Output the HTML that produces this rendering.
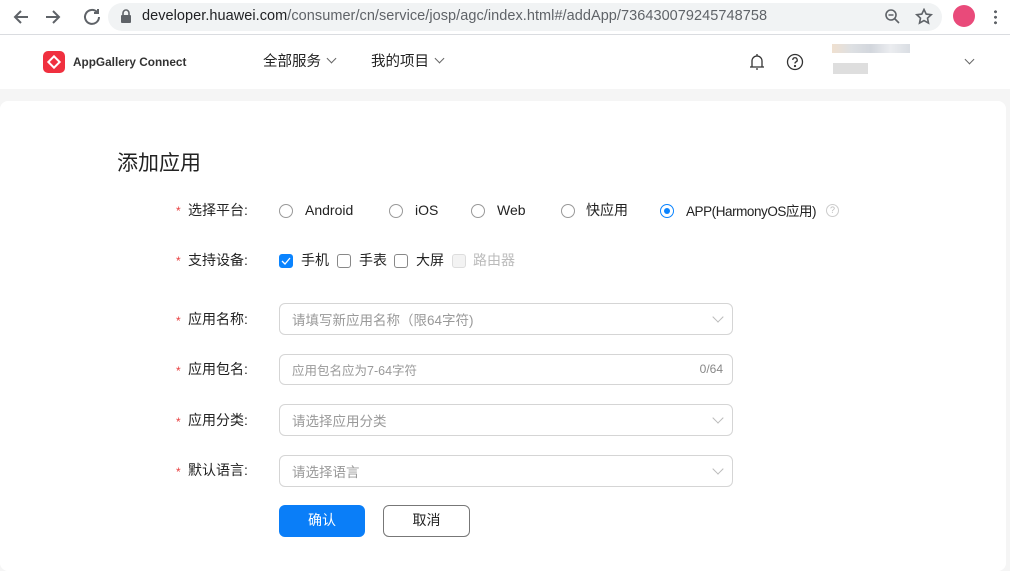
<!DOCTYPE html>
<html><head><meta charset="utf-8"><style>
*{margin:0;padding:0;box-sizing:border-box}
body{width:1010px;height:565px;overflow:hidden;background:#f5f5f5;font-family:"Liberation Sans","Noto Sans CJK SC",sans-serif;position:relative;color:#222}
.abs{position:absolute}
.chrome{left:0;top:0;width:1010px;height:35px;background:#fff;border-bottom:1px solid #dadce0}
.url{left:108px;top:3px;width:834px;height:28px;background:#f1f3f4;border-radius:14px}
.urltext{left:142px;top:8px;font-size:14.5px;color:#202124;letter-spacing:0.05px}
.hdr{left:0;top:35px;width:1010px;height:54px;background:#fff}
.card{left:0;top:101px;width:1006px;height:470px;background:#fff;border-radius:8px}
.lab{font-size:14px;color:#222}
.cj{margin-top:-2px}
.star{color:#e84040;font-size:12px}
.radio{width:14px;height:14px;border:1px solid #999;border-radius:50%;background:#fff}
.cb{width:14px;height:14px;border:1px solid #888;border-radius:3px;background:#fff}
.inp{left:279px;width:454px;height:32px;border:1px solid #d5d5d5;border-radius:6px;background:#fff}
.ph{left:12px;top:5px;font-size:13.5px;color:#999}
.chev{right:10px;top:9px;width:8px;height:8px;border-right:1px solid #bbb;border-bottom:1px solid #bbb;transform:rotate(45deg)}
</style></head><body>
<div class="abs chrome"></div>
<svg class="abs" style="left:12px;top:8px" width="90" height="18" viewBox="0 0 90 18" fill="none" stroke="#5f6368" stroke-width="2">
<path d="M16 9H3M9 3L3 9l6 6"/><path d="M34 9h13M41 3l6 6-6 6"/>
<path d="M87 9a7 7 0 1 1-2-5" /><path d="M86 1v4h-4" />
</svg>
<div class="abs url"></div>
<svg class="abs" style="left:120px;top:9px" width="12" height="14" viewBox="0 0 12 14"><rect x="1" y="6" width="10" height="8" rx="1" fill="#5f6368"/><path d="M3 6V4a3 3 0 0 1 6 0v2" stroke="#5f6368" stroke-width="1.6" fill="none"/></svg>
<div class="abs urltext">developer.huawei.com<span style="color:#5f6368">/consumer/cn/service/josp/agc/index.html#/addApp/736430079245748758</span></div>
<svg class="abs" style="left:884px;top:8px" width="50" height="18" viewBox="0 0 50 18" fill="none" stroke="#5f6368" stroke-width="1.6"><circle cx="7" cy="7" r="5"/><path d="M11 11l4 4M4.5 7h5"/><path d="M40 1.5l2.2 4.6 5 .6-3.7 3.4 1 5-4.5-2.5-4.5 2.5 1-5-3.7-3.4 5-.6z"/></svg>
<div class="abs" style="left:953px;top:5px;width:22px;height:22px;border-radius:50%;background:#e94a7a"></div>
<div class="abs" style="left:994px;top:9px;width:3px;height:16px;background:radial-gradient(circle,#5f6368 1.4px,transparent 1.6px) 0 0/3px 5.5px"></div>

<div class="abs hdr"></div>
<div class="abs" style="left:43px;top:51px;width:22px;height:22px;border-radius:5px;background:#f0303f"></div>
<div class="abs" style="left:49px;top:57px;width:10px;height:10px;border:2.5px solid #fff;transform:rotate(45deg)"></div>
<div class="abs" style="left:73px;top:55px;font-size:11.8px;font-weight:bold;color:#333">AppGallery Connect</div>
<div class="abs" style="left:263px;top:50px;font-size:14.5px">全部服务</div>
<div class="abs" style="left:328px;top:55px;width:7px;height:7px;border-right:1px solid #666;border-bottom:1px solid #666;transform:rotate(45deg)"></div>
<div class="abs" style="left:371px;top:50px;font-size:14.5px">我的项目</div>
<div class="abs" style="left:436px;top:55px;width:7px;height:7px;border-right:1px solid #666;border-bottom:1px solid #666;transform:rotate(45deg)"></div>
<svg class="abs" style="left:748px;top:52px" width="20" height="20" viewBox="0 0 20 20" fill="none" stroke="#333" stroke-width="1.3"><path d="M4 15V9a5 5 0 0 1 10 0v6zM2 15h14M8 17h2M9 2v2"/></svg>
<svg class="abs" style="left:786px;top:53px" width="18" height="18" viewBox="0 0 18 18" fill="none" stroke="#333" stroke-width="1.3"><circle cx="9" cy="9" r="7.5"/><path d="M6.8 7a2.2 2.2 0 1 1 3 2c-.6.3-.8.8-.8 1.5"/><circle cx="9" cy="13" r=".5" fill="#333"/></svg>
<div class="abs" style="left:832px;top:44px;width:78px;height:9px;background:linear-gradient(90deg,#ecd9c4,#d5d8dc,#c7ccd4,#e6e8ec,#d0d5dc);opacity:.8"></div>
<div class="abs" style="left:833px;top:63px;width:35px;height:11px;background:#d6d6d6;opacity:.8"></div>
<div class="abs" style="left:966px;top:56px;width:7px;height:7px;border-right:1px solid #666;border-bottom:1px solid #666;transform:rotate(45deg)"></div>

<div class="abs card"></div>
<div class="abs" style="left:117px;top:147px;font-size:21px;color:#222">添加应用</div>

<div class="abs star" style="left:176px;top:204px">*</div><div class="abs lab cj" style="left:188px;top:202px">选择平台:</div>
<div class="abs radio" style="left:279px;top:204px"></div><div class="abs lab" style="left:305px;top:202px">Android</div>
<div class="abs radio" style="left:389px;top:204px"></div><div class="abs lab" style="left:415px;top:202px">iOS</div>
<div class="abs radio" style="left:471px;top:204px"></div><div class="abs lab" style="left:497px;top:202px">Web</div>
<div class="abs radio" style="left:561px;top:204px"></div><div class="abs lab cj" style="left:586px;top:202px">快应用</div>
<div class="abs radio" style="left:660px;top:204px;border-color:#0a84ff"></div><div class="abs" style="left:664px;top:208px;width:6px;height:6px;border-radius:50%;background:#0a84ff"></div>
<div class="abs lab cj" style="left:686px;top:202px;font-size:13.5px;letter-spacing:-0.45px">APP(HarmonyOS应用)</div>
<div class="abs" style="left:826px;top:204px;width:13px;height:13px;border:1px solid #ccc;border-radius:50%;font-size:9px;color:#bbb;text-align:center;line-height:11px">?</div>

<div class="abs star" style="left:176px;top:254px">*</div><div class="abs lab cj" style="left:188px;top:252px">支持设备:</div>
<div class="abs cb" style="left:279px;top:254px;background:#0a84ff;border-color:#0a84ff"></div>
<svg class="abs" style="left:281px;top:257px" width="10" height="8"><path d="M1 4l3 3 5-6" stroke="#fff" stroke-width="1.3" fill="none"/></svg>
<div class="abs lab cj" style="left:301px;top:252px">手机</div>
<div class="abs cb" style="left:337px;top:254px"></div><div class="abs lab cj" style="left:359px;top:252px">手表</div>
<div class="abs cb" style="left:394px;top:254px"></div><div class="abs lab cj" style="left:416px;top:252px">大屏</div>
<div class="abs cb" style="left:452px;top:254px;border-color:#ddd;background:#f3f3f3"></div><div class="abs lab cj" style="left:473px;top:252px;color:#bbb">路由器</div>

<div class="abs star" style="left:176px;top:314px">*</div><div class="abs lab cj" style="left:188px;top:311px">应用名称:</div>
<div class="abs inp" style="top:303px"><div class="abs ph">请填写新应用名称（限64字符)</div><div class="abs chev"></div></div>
<div class="abs star" style="left:176px;top:364px">*</div><div class="abs lab cj" style="left:188px;top:361px">应用包名:</div>
<div class="abs inp" style="top:354px;height:31px"><div class="abs ph" style="font-size:12.5px;top:5px">应用包名应为7-64字符</div><div class="abs" style="right:9px;top:7px;font-size:12px;color:#888">0/64</div></div>
<div class="abs star" style="left:176px;top:415px">*</div><div class="abs lab cj" style="left:188px;top:412px">应用分类:</div>
<div class="abs inp" style="top:404px"><div class="abs ph">请选择应用分类</div><div class="abs chev"></div></div>
<div class="abs star" style="left:176px;top:465px">*</div><div class="abs lab cj" style="left:188px;top:462px">默认语言:</div>
<div class="abs inp" style="top:455px"><div class="abs ph">请选择语言</div><div class="abs chev"></div></div>

<div class="abs" style="left:279px;top:505px;width:86px;height:32px;background:#0a7ef8;border-radius:6px;color:#fff;font-size:14px;text-align:center;line-height:30px">确认</div>
<div class="abs" style="left:383px;top:505px;width:87px;height:32px;border:1px solid #777;border-radius:6px;color:#222;font-size:14px;text-align:center;line-height:28px;background:#fff">取消</div>
</body></html>
